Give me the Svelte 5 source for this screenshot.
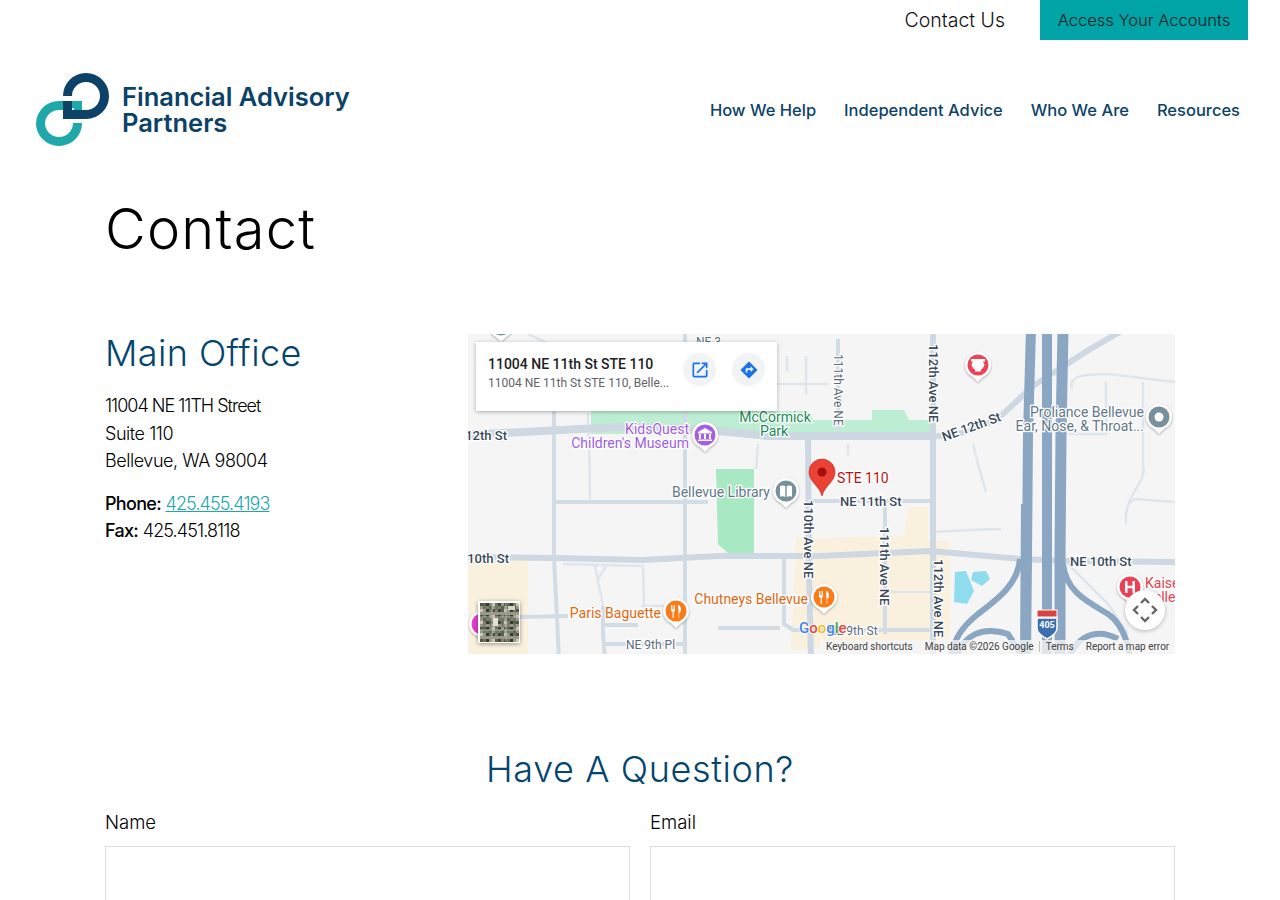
<script>
	const navItems = ['How We Help', 'Independent Advice', 'Who We Are', 'Resources']

	const majorRoads = [
		'M465 102 C490 102 515 94 535 80 L565 52 L619 17 L655 -4',
		'M-5 223 L87 224 L175 226 L250 222 L352 222 L462 217 L552 225 L602 227 L712 228',
		'M465 -5 L465 325',
		'M340 100 L341 240 L343 325'
	]
	const midRoads = [
		'M217 -5 L217 325',
		'M86 70 L86 224 L91 325',
		'M340 167 L465 167',
		'M370 5 L370 100',
		'M417 167 L417 300',
		'M88 168 L240 168',
		'M316 225 L316 290 L325 296 L370 296 L405 296 L465 296',
		'M135 272 L135 300 L137 325',
		'M137 310 L217 310',
		'M52 283 L100 282',
		'M135 291 L170 291',
		'M250 294 L312 294'
	]
	const minorRoads = [
		'M95 230 L175 232 L176 270 L175 272 L217 272',
		'M127 232 L135 272',
		'M138 232 L130 245',
		'M465 198 L500 196 L533 195',
		'M417 258 L465 258',
		'M120 79 L120 102',
		'M121 98 L122 165',
		'M290 110 L288 135',
		'M319 22 L319 37',
		'M338 22 L338 60',
		'M304 50 L360 50',
		'M604 55 C600 42 615 40 640 40 L707 48',
		'M638 48 L638 100 L600 100',
		'M675 48 L675 130 C680 150 655 160 658 190',
		'M380 110 L380 122',
		'M505 110 L510 130 L518 158',
		'M600 230 L640 270 L660 300',
		'M660 170 L667 165 L707 168',
		'M60 0 L90 14'
	]
	const freewayLanes = [
		{ d: 'M563 -5 L560 100 L559 225 L558 325', w: 10 },
		{ d: 'M579 -5 L579 325', w: 10 },
		{ d: 'M595 -5 L593 100 L592 225 L592 325', w: 11 },
		{ d: 'M556 170 L555 325', w: 6 }
	]
	const ramps = [
		'M552 225 C550 250 530 265 510 280 C495 292 485 305 483 325',
		'M595 230 C598 258 620 268 640 280 C652 288 660 305 662 325',
		'M488 325 C495 300 515 292 540 300 L553 320',
		'M600 325 C610 300 630 294 650 305'
	]
	const rotated = [
		{ t: '112th Ave NE', x: 465, y: 10, cls: 'major-label' },
		{ t: '111th Ave NE', x: 370, y: 20, cls: '' },
		{ t: '110th Ave NE', x: 340, y: 166, cls: 'major-label' },
		{ t: '111th Ave NE', x: 416, y: 193, cls: 'major-label' },
		{ t: '112th Ave NE', x: 470, y: 225, cls: 'major-label' }
	]

	// aerial thumbnail: blocks of roofs and trees
	const aerialColors = ['#4d5a40', '#6f7560', '#2f3d2a', '#9a9688', '#c9c6ba', '#5b6350', '#3c4a34', '#7f7d70']
	const aerial = []
	for (let row = 0; row < 13; row++) {
		for (let col = 0; col < 13; col++) {
			aerial.push({ x: 12 + col * 3, y: 269 + row * 3, c: aerialColors[(row * row * 3 + col * 5 + row * col) % 8] })
		}
	}
</script>

{#snippet poi(x, y, color, kind)}
	<g transform="translate({x} {y})">
		<path class="poi-back" d="M-13 0a13 13 0 1 1 26 0c0 6-4 10-8 12l-5 5-5-5c-4-2-8-6-8-12z" />
		<circle r="10.5" fill={color} />
		{#if kind === 'food'}
			<path d="M-5-6v5c0 1 1 2 1.600 2V7h1.200V1C-1.600 1-1-.2-1-1v-5h-.9v4h-.7v-4h-.8v4h-.7v-4zM2-6c2 0 3 2 3 5 0 2-1 2.500-1.800 2.500V7H2.800z" fill="#fff" />
		{:else if kind === 'museum'}
			<path d="M0-7L7-3v1.500H-7V-3zM-6-1h2v5h-2zM-1-1h2v5h-2zM4-1h2v5H4zM-7 4.500H7V6H-7z" fill="#fff" />
		{:else if kind === 'book'}
			<path d="M-6-5c2-.8 4-.8 5.300.2V6C-2 5.200-4 5.200-6 5.800zM6-5c-2-.8-4-.8-5.300.2V6C2 5.200 4 5.200 6 5.800z" fill="#fff" />
		{:else if kind === 'dot'}
			<circle r="4.500" fill="#fff" />
		{:else if kind === 'pharmacy'}
			<path d="M-7-6L7-6V-3.500H5L6.500-.5C6 2.500 4 4 3 4.500V6.500H-3V4.500C-4 4-6 2.500-6.500-.5L-5-3.500H-7z" fill="#fff" />
		{:else if kind === 'hospital'}
			<path d="M-5-6h2.500v4.800h5V-6H5V6H2.500V1.200h-5V6H-5z" fill="#fff" />
		{/if}
	</g>
{/snippet}

<div class="top-bar">
	<a class="contact-link" href="#contact">Contact Us</a>
	<a class="accounts" href="#accounts">Access Your Accounts</a>
</div>

<header class="main-nav">
	<a class="logo" href="#home">
		<svg width="74" height="74" viewBox="0 0 74 74" aria-hidden="true">
			<path d="M4.500 50a18.500 18.500 0 1 0 37 0" fill="none" stroke="#1fa8aa" stroke-width="9" />
			<path d="M23 32.500a18.500 18.500 0 0 0-18.500 18.500" fill="none" stroke="#1fa8aa" stroke-width="9" />
			<rect x="23" y="28" width="23" height="9" fill="#1fa8aa" />
			<path d="M31.500 23a18.500 18.500 0 1 1 18.500 18.500H27" fill="none" stroke="#0c4268" stroke-width="9" />
			<rect x="27" y="28" width="9" height="18" fill="#0c4268" />
			<rect x="36" y="28" width="10" height="9" fill="#1fa8aa" />
			<rect x="36" y="35" width="2" height="2" fill="#fff" />
		</svg>
		<span class="logo-text">Financial Advisory<br />Partners</span>
	</a>
	<nav>
		{#each navItems as item}
			<a href="#nav">{item}</a>
		{/each}
	</nav>
</header>

<main>
	<h1>Contact</h1>

	<section class="office">
		<div class="details">
			<h2>Main Office</h2>
			<p><span class="narrow">11004 NE 11TH Street</span><br />Suite 110<br />Bellevue, WA 98004</p>
			<p class="numbers">
				<strong>Phone:</strong> <a href="#tel">425.455.4193</a><br />
				<strong>Fax:</strong> <span>425.451.8118</span>
			</p>
		</div>

		<div class="map">
			<svg width="707" height="320" viewBox="0 0 707 320" aria-label="Map of 11004 NE 11th St">
				<rect width="707" height="320" fill="#f5f5f5" />

				<path d="M323 316 L328 204 L436 202 L440 173 L460 173 L460 207 L482 207 L482 304z" fill="#f9f1de" />
				<path d="M0 222 L60 220 L60 320 L0 320z" fill="#f9f1de" />

				<path d="M123 100 L123 77 L340 77 L345 86 L404 86 L404 76 L436 76 L441 86 L462 86 L462 100z" fill="#bdeed3" />
				<path d="M248 135 L286 135 L286 221 L262 221 L250 210z" fill="#a8e8c3" />
				<path d="M487 238 L498 237 L506 257 L499 270 L486 268z" fill="#8fdcef" />
				<path d="M505 238 L518 237 L522 245 L514 252 L503 246z" fill="#8fdcef" />

				{#each minorRoads as d}
					<path {d} class="road minor" />
				{/each}
				{#each midRoads as d}
					<path {d} class="road mid" />
				{/each}
				<path d="M-5 101 L150 93 L230 95 L300 102 L465 102" class="road twelfth" />
				{#each majorRoads as d}
					<path {d} class="road major" />
				{/each}
				{#each ramps as d}
					<path {d} class="road ramp" />
				{/each}
				{#each freewayLanes as lane}
					<path d={lane.d} class="road freeway" stroke-width={lane.w} />
				{/each}

				<path d="M569 284 h20 v10 c0 6-6 9-10 11 c-4-2-10-5-10-11z" fill="#3a6fb0" stroke="#fff" stroke-width="1.500" />
				<rect x="569" y="276" width="20" height="7" fill="#d9433e" stroke="#fff" stroke-width="1" />
				<text x="579" y="294" class="shield">405</text>

				{#each rotated as r}
					<text transform="translate({r.x} {r.y}) rotate(90)" y="4" class="label {r.cls}">{r.t}</text>
				{/each}
				<text transform="translate(505 97) rotate(-20)" text-anchor="middle" class="label major-label">NE 12th St</text>
				<text x="39" y="106" text-anchor="end" class="label major-label">NE 12th St</text>
				<text x="41" y="229" text-anchor="end" class="label major-label">NE 10th St</text>
				<text x="602" y="232" class="label major-label">NE 10th St</text>
				<text x="372" y="172" class="label major-label">NE 11th St</text>
				<text x="158" y="315" class="label">NE 9th Pl</text>
				<text x="360" y="301" class="label">NE 9th St</text>
				<text x="228" y="12" class="label">NE 3</text>

				<text x="307" y="88" text-anchor="middle" class="poi-label park">McCormick</text>
				<text x="306" y="102" text-anchor="middle" class="poi-label park">Park</text>
				<text x="221" y="100" text-anchor="end" class="poi-label museum">KidsQuest</text>
				<text x="221" y="114" text-anchor="end" class="poi-label museum">Children's Museum</text>
				<text x="302" y="163" text-anchor="end" class="poi-label grey">Bellevue Library</text>
				<text x="193" y="284" text-anchor="end" class="poi-label food">Paris Baguette</text>
				<text x="340" y="270" text-anchor="end" class="poi-label food">Chutneys Bellevue</text>
				<text x="676" y="83" text-anchor="end" class="poi-label grey">Proliance Bellevue</text>
				<text x="676" y="97" text-anchor="end" class="poi-label grey">Ear, Nose, &amp; Throat...</text>
				<text x="677" y="254" class="poi-label hospital">Kaiser</text>
				<text x="677" y="268" class="poi-label hospital">Bellevue</text>

				{@render poi(237, 101, '#a55ee9', 'museum')}
				{@render poi(318, 157, '#78909c', 'book')}
				{@render poi(208, 277, '#fa7b17', 'food')}
				{@render poi(356, 263, '#fa7b17', 'food')}
				{@render poi(691, 83, '#78909c', 'dot')}
				{@render poi(510, 31, '#ef4158', 'pharmacy')}
				{@render poi(662, 253, '#ee3f55', 'hospital')}
				{@render poi(14, 290, '#e040c8', 'none')}
				{@render poi(33, -9, '#78909c', 'none')}

				<path d="M354 162 C351 151 341 148 341 138 a13 13 0 0 1 26 0 C367 148 357 151 354 162z" fill="#ea4335" stroke="#c5221f" stroke-width=".6" />
				<circle cx="354" cy="138" r="4.500" fill="#a50e0e" />
				<text x="369" y="149" class="poi-label pin">STE 110</text>

				<text x="331" y="299" class="google"><tspan fill="#4285f4">G</tspan><tspan fill="#ea4335">o</tspan><tspan fill="#fbbc04">o</tspan><tspan fill="#4285f4">g</tspan><tspan fill="#34a853">l</tspan><tspan fill="#ea4335">e</tspan></text>

				<g class="thumb">
					<rect x="10" y="267" width="42" height="42" fill="#fff" />
					{#each aerial as a}
						<rect x={a.x} y={a.y} width="3" height="3" fill={a.c} />
					{/each}
					<path d="M12 283h38M12 296h38M24 269v38M38 269v38" stroke="#b3b2a6" stroke-width="1" />
					<rect x="25" y="284" width="5" height="8" fill="#e3e0d6" />
					<rect x="40" y="272" width="7" height="4" fill="#d8d5ca" />
				</g>
			</svg>

			<div class="info-card">
				<div class="info-text">
					<div class="info-title">11004 NE 11th St STE 110</div>
					<div class="info-sub">11004 NE 11th St STE 110, Belle...</div>
				</div>
				<span class="info-btn">
					<svg width="20" height="20" viewBox="0 0 24 24"><path fill="#1a73e8" d="M19 19H5V5h7V3H5a2 2 0 0 0-2 2v14a2 2 0 0 0 2 2h14c1.100 0 2-.9 2-2v-7h-2v7zM14 3v2h3.590l-9.830 9.830 1.410 1.410L19 6.410V10h2V3h-7z" /></svg>
				</span>
				<span class="info-btn">
					<svg width="20" height="20" viewBox="0 0 24 24"><path fill="#1a73e8" d="M21.710 11.290l-9-9a.996.996 0 0 0-1.410 0l-9 9a.996.996 0 0 0 0 1.410l9 9c.39.39 1.020.39 1.410 0l9-9a.996.996 0 0 0 0-1.410zM14 14.500V12h-4v3H8v-4c0-.55.45-1 1-1h5V7.500l3.500 3.500-3.500 3.500z" /></svg>
				</span>
			</div>

			<button class="compass" aria-label="Map camera controls">
				<svg width="26" height="26" viewBox="0 0 26 26"><path d="M9 6l4-4 4 4M9 20l4 4 4-4M6 9l-4 4 4 4M20 9l4 4-4 4" fill="none" stroke="#666" stroke-width="2.400" /></svg>
			</button>

			<div class="map-footer">
				<span>Keyboard shortcuts</span>
				<span>Map data ©2026 Google</span>
				<span class="sep">Terms</span>
				<span>Report a map error</span>
			</div>
		</div>
	</section>

	<section class="question">
		<h2>Have A Question?</h2>
		<form>
			<label>Name<input type="text" /></label>
			<label>Email<input type="email" /></label>
		</form>
	</section>
</main>

<style>
	:global(body) {
		font-family: Inter, 'Open Sans', sans-serif;
		font-weight: 300;
		color: #000;
		background: #fff;
	}
	a {
		text-decoration: none;
		color: inherit;
	}
	.top-bar {
		display: flex;
		justify-content: flex-end;
		align-items: center;
		height: 40px;
		padding-right: 32px;
	}
	.contact-link {
		font-size: 19.500px;
		margin-right: 35px;
		color: #111;
	}
	.accounts {
		display: flex;
		align-items: center;
		justify-content: center;
		width: 208px;
		height: 40px;
		background: #00a3a6;
		font-size: 16.500px;
		color: #001b20;
	}
	.main-nav {
		display: flex;
		align-items: center;
		justify-content: space-between;
		height: 140px;
		padding: 0 40px 0 36px;
	}
	.logo {
		display: flex;
		align-items: center;
		gap: 12px;
		color: #0c4268;
	}
	.logo-text {
		font-size: 25.500px;
		line-height: 26px;
		font-weight: 600;
	}
	nav {
		display: flex;
		gap: 28px;
	}
	nav a {
		font-size: 16.500px;
		font-weight: 500;
		color: #0c4268;
	}
	main {
		width: 1070px;
		margin: 0 auto;
	}
	h1 {
		margin: 0;
		font-size: 56px;
		line-height: 64px;
		font-weight: 300;
		letter-spacing: 1.200px;
		padding-top: 17px;
		color: #000;
	}
	h2 {
		margin: 0;
		font-size: 36px;
		line-height: 44px;
		font-weight: 300;
		letter-spacing: 0.600px;
		color: #03456f;
	}
	.office {
		display: flex;
		margin-top: 73px;
	}
	.details {
		width: 363px;
		flex: none;
		font-size: 18px;
		line-height: 27.500px;
		letter-spacing: -0.450px;
	}
	.details h2 {
		margin-bottom: 20px;
		line-height: 38px;
		letter-spacing: 0.400px;
	}
	.details p {
		margin: 0 0 15px;
	}
	.details .narrow {
		letter-spacing: -1px;
	}
	.details strong {
		font-weight: 500;
		letter-spacing: -0.700px;
	}
	.numbers a,
	.numbers span {
		letter-spacing: -0.900px;
	}
	.numbers a {
		color: #1ba7ab;
		text-decoration: underline;
	}
	.map {
		position: relative;
		width: 707px;
		height: 320px;
		overflow: hidden;
		letter-spacing: normal;
	}
	.map svg {
		display: block;
	}
	.road {
		fill: none;
	}
	.twelfth {
		stroke: #cdd8e2;
		stroke-width: 8;
	}
	.major {
		stroke: #cdd8e2;
		stroke-width: 6;
	}
	.mid {
		stroke: #d2dce5;
		stroke-width: 4;
	}
	.minor {
		stroke: #dfe5ec;
		stroke-width: 2.500;
	}
	.freeway {
		stroke: #8ba6c3;
	}
	.ramp {
		stroke: #8ba6c3;
		stroke-width: 6;
	}
	.label {
		font-family: Roboto, sans-serif;
		font-size: 12px;
		font-weight: 400;
		fill: #5c6c7c;
		stroke: #fff;
		stroke-width: 2.500;
		paint-order: stroke;
	}
	.major-label {
		font-size: 13px;
		font-weight: 500;
		fill: #3a4a5c;
	}
	.poi-label {
		font-family: Roboto, sans-serif;
		font-size: 14px;
		font-weight: 400;
		stroke: #fff;
		stroke-width: 2.500;
		paint-order: stroke;
	}
	.park {
		fill: #188a55;
	}
	.museum {
		fill: #a05ce8;
	}
	.grey {
		fill: #637888;
	}
	.food {
		fill: #e0670f;
	}
	.hospital {
		fill: #e5404f;
	}
	.pin {
		fill: #b31412;
	}
	.poi-back {
		fill: #fff;
		filter: drop-shadow(0 1px 1px rgba(0, 0, 0, 0.3));
	}
	.shield {
		font-family: Roboto, sans-serif;
		font-size: 9px;
		font-weight: 700;
		fill: #fff;
		text-anchor: middle;
	}
	.google {
		font-family: Roboto, sans-serif;
		font-size: 15px;
		font-weight: 500;
		stroke: #fff;
		stroke-width: 1.500;
		paint-order: stroke;
	}
	.thumb {
		filter: drop-shadow(0 1px 2px rgba(0, 0, 0, 0.4));
	}
	.info-card {
		position: absolute;
		left: 8px;
		top: 8px;
		width: 301px;
		height: 69px;
		box-sizing: border-box;
		display: flex;
		align-items: flex-start;
		padding: 13px 12px 0 12px;
		background: #fff;
		box-shadow: 0 1px 4px rgba(0, 0, 0, 0.3);
		font-family: Roboto, sans-serif;
	}
	.info-text {
		width: 195px;
		flex: none;
	}
	.info-title {
		font-size: 14px;
		line-height: 18px;
		font-weight: 500;
		color: #202124;
	}
	.info-sub {
		margin-top: 1px;
		font-size: 12px;
		line-height: 18px;
		font-weight: 400;
		color: #5f6368;
	}
	.info-btn {
		display: flex;
		align-items: center;
		justify-content: center;
		width: 33px;
		height: 33px;
		margin-top: -2px;
		margin-right: 16px;
		flex: none;
		border-radius: 50%;
		background: #f1f3f4;
	}
	.info-btn:last-child {
		margin-right: 0;
	}
	.compass {
		position: absolute;
		left: 657px;
		top: 256px;
		width: 40px;
		height: 40px;
		padding: 7px;
		border: 0;
		border-radius: 50%;
		background: #fff;
		box-shadow: 0 1px 4px rgba(0, 0, 0, 0.25);
	}
	.map-footer {
		position: absolute;
		right: 0;
		bottom: 0;
		width: 355px;
		height: 14px;
		box-sizing: border-box;
		display: flex;
		align-items: center;
		gap: 12px;
		padding: 0 0 2px 6px;
		background: rgba(245, 245, 245, 0.8);
		font-family: Roboto, sans-serif;
		font-size: 10px;
		font-weight: 400;
		color: #444;
		white-space: nowrap;
	}
	.sep {
		border-left: 1px solid #bbb;
		padding-left: 6px;
		margin-left: -7px;
	}
	.question {
		margin-top: 93px;
	}
	.question h2 {
		text-align: center;
	}
	form {
		display: flex;
		gap: 20px;
		margin-top: 17px;
	}
	label {
		flex: 1;
		font-size: 18.500px;
		line-height: 28px;
	}
	input {
		display: block;
		width: 100%;
		height: 70px;
		margin-top: 10px;
		box-sizing: border-box;
		border: 1px solid #ddd;
		background: #fff;
	}
</style>
